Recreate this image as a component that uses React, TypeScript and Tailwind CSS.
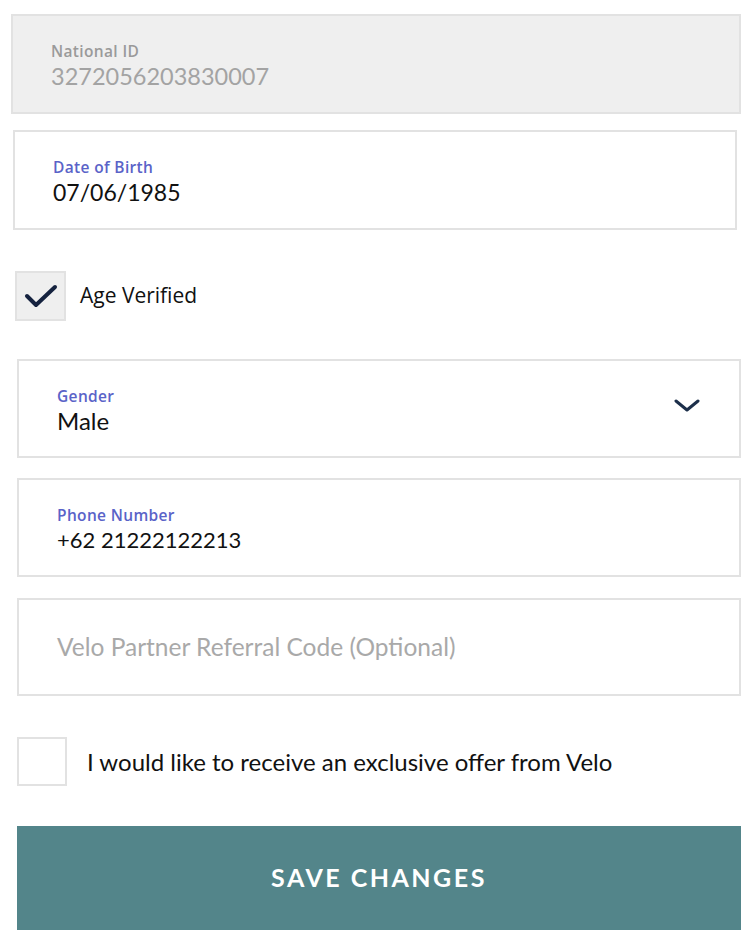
import { ReactNode } from "react";

function Field({
  label,
  value,
  disabled,
  className,
  valueSize,
  right,
}: {
  label: string;
  value: string;
  disabled?: boolean;
  className?: string;
  valueSize?: string;
  right?: ReactNode;
}) {
  return (
    <div
      className={`flex items-center border-2 border-[#e2e2e2] pl-[38px] pr-[38px] ${
        disabled ? "bg-[#efefef]" : "bg-white"
      } ${className ?? ""}`}
    >
      <div className="flex flex-col flex-1 pt-[4px]">
        <span
          className={`font-['Open_Sans',sans-serif] text-[15.5px] leading-[20px] font-semibold tracking-[0.35px] ${
            disabled ? "text-[#9a9a9a]" : "text-[#5a63c8]"
          }`}
        >
          {label}
        </span>
        <span
          className={`mt-[1px] leading-[28px] ${valueSize ?? "text-[23px]"} ${
            disabled ? "text-[#a3a3a3]" : "text-[#111]"
          }`}
        >
          {value}
        </span>
      </div>
      {right}
    </div>
  );
}

export default function App() {
  return (
    <div className="w-[756px] h-[930px] bg-white flex flex-col font-['Lato',sans-serif] overflow-hidden">
      {/* NATIONAL ID (locked) */}
      <Field
        label="National ID"
        value="3272056203830007"
        disabled
        valueSize="text-[23.5px]"
        className="mt-[14px] ml-[11px] w-[730px] h-[100px]"
      />

      {/* DATE OF BIRTH */}
      <Field
        label="Date of Birth"
        value="07/06/1985"
        className="mt-[16px] ml-[13px] w-[724px] h-[100px]"
      />

      {/* AGE VERIFIED */}
      <div className="mt-[41px] ml-[15px] flex items-center">
        <div className="w-[51px] h-[50px] bg-[#efefef] border-2 border-[#e2e2e2] flex items-center justify-center">
          <svg width="34" height="26" viewBox="0 0 34 26" fill="none">
            <path
              d="M3 13 L12 22 L31 4"
              stroke="#15223f"
              strokeWidth="4"
              strokeLinecap="round"
              strokeLinejoin="round"
            />
          </svg>
        </div>
        <span className="ml-[14px] text-[21px] text-[#111] font-['Open_Sans',sans-serif]">
          Age Verified
        </span>
      </div>

      {/* GENDER */}
      <Field
        label="Gender"
        value="Male"
        valueSize="text-[24px]"
        className="mt-[38px] ml-[17px] w-[724px] h-[99px]"
        right={
          <svg width="26" height="14" viewBox="0 0 26 14" fill="none" className="mb-[4px] mr-[1px]">
            <path
              d="M2 2 L13 11 L24 2"
              stroke="#1c2f4a"
              strokeWidth="3"
              strokeLinecap="round"
              strokeLinejoin="round"
            />
          </svg>
        }
      />

      {/* PHONE */}
      <Field
        label="Phone Number"
        value="+62 21222122213"
        valueSize="text-[22px]"
        className="mt-[20px] ml-[17px] w-[724px] h-[100px]"
      />

      {/* REFERRAL CODE */}
      <div className="mt-[21px] ml-[17px] w-[724px] h-[98px] border-2 border-[#e2e2e2] bg-white flex items-center pl-[38px]">
        <span className="text-[24.5px] text-[#a9a9a9]">Velo Partner Referral Code (Optional)</span>
      </div>

      {/* OFFER CHECKBOX */}
      <div className="mt-[41px] ml-[17px] flex items-center">
        <div className="w-[50px] h-[49px] bg-white border-2 border-[#e2e2e2]" />
        <span className="ml-[20px] text-[24px] text-[#111]">
          I would like to receive an exclusive offer from Velo
        </span>
      </div>

      {/* SAVE */}
      <button className="mt-[40px] ml-[17px] w-[724px] h-[104px] bg-[#53858a] text-white text-[25px] font-bold tracking-[2.5px] uppercase">
        Save Changes
      </button>
    </div>
  );
}
